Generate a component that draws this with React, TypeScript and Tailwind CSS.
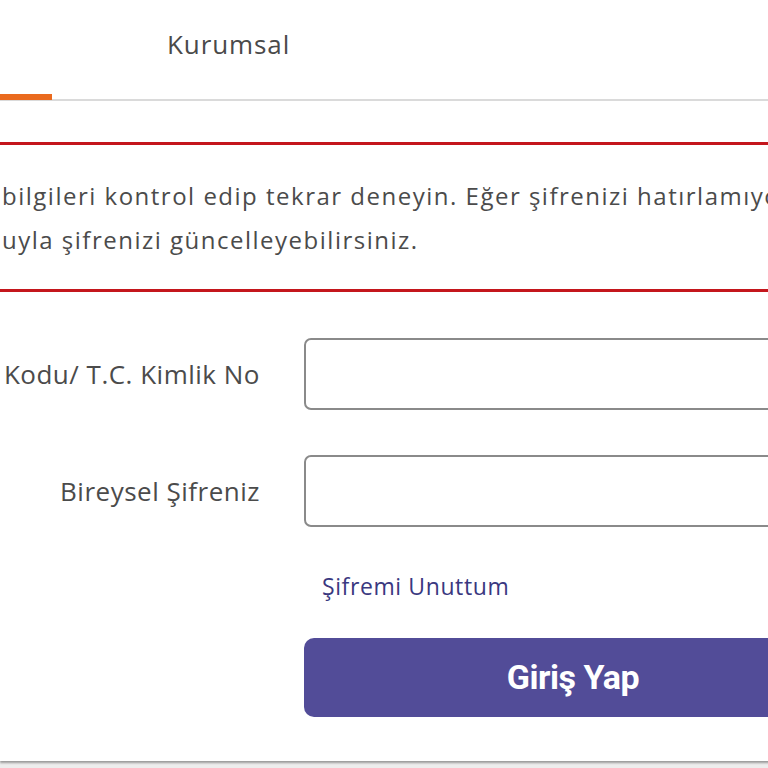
import React from "react";

const font = { fontFamily: '"Open Sans", "Liberation Sans", sans-serif' };

export default function App() {
  return (
    <div
      className="w-[768px] h-[768px] overflow-hidden bg-[#ededed] text-[#4b4b4b]"
      style={font}
    >
      <div className="w-[900px] h-[761px] bg-white shadow-[0_2px_2px_rgba(0,0,0,0.35)]">
        {/* Tabs */}
        <div className="flex h-[101px] border-b-2 border-[#dadada]">
          <div className="w-[52px] flex flex-col justify-end">
            <div className="h-[6px] bg-[#ea6a1e] -mb-[1px]" />
          </div>
          <div className="ml-[115px] pt-[26px] text-[26px] leading-[36px] tracking-[0.9px] text-[#4a4a4a]">
            Kurumsal
          </div>
        </div>

        {/* Error message */}
        <div className="mt-[41px] border-y-[3px] border-[#c4161c] pt-[29px] pb-[27px] pl-[2px] text-[24px] leading-[44px] tracking-[1.5px] whitespace-nowrap">
          <p>bilgileri kontrol edip tekrar deneyin. Eğer şifrenizi hatırlamıyorsanız</p>
          <p>uyla şifrenizi güncelleyebilirsiniz.</p>
        </div>

        {/* Form */}
        <div className="mt-[46px] flex flex-col">
          <div className="flex items-center gap-[44px]">
            <label className="w-[260px] whitespace-nowrap text-right text-[26px] tracking-[0.5px]">
              Kodu/ T.C. Kimlik No
            </label>
            <input
              type="text"
              className="w-[538px] h-[72px] rounded-[7px] border-2 border-[#8a8a8a] bg-white outline-none"
            />
          </div>
          <div className="mt-[45px] flex items-center gap-[44px]">
            <label className="w-[260px] whitespace-nowrap text-right text-[26px] tracking-[0.5px]">
              Bireysel Şifreniz
            </label>
            <input
              type="password"
              className="w-[538px] h-[72px] rounded-[7px] border-2 border-[#8a8a8a] bg-white outline-none"
            />
          </div>
          <div className="ml-[322px] mt-[43px] text-[23px] leading-[32px] tracking-[0.6px] text-[#3a3880]">
            Şifremi Unuttum
          </div>
          <div className="ml-[304px] mt-[36px]">
            <button
              className="w-[538px] h-[79px] rounded-[10px] bg-[#524c98] text-white text-[34px] font-bold tracking-[-0.5px]"
              style={{ fontFamily: 'Roboto, "Liberation Sans", sans-serif' }}
            >
              Giriş Yap
            </button>
          </div>
        </div>
      </div>
    </div>
  );
}
